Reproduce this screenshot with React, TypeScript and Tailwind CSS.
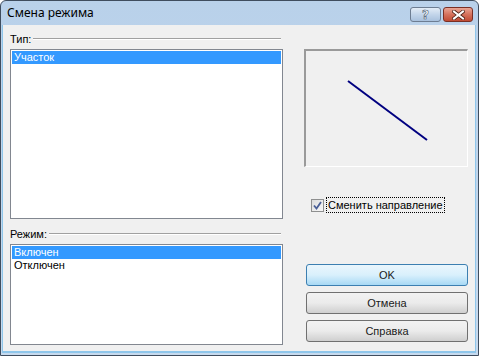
import React from "react";

const ui = { fontFamily: '"Liberation Sans", Arial, sans-serif' };

function GroupLabel({ text }: { text: string }) {
  return (
    <div className="flex h-[14px] items-center text-[11px] leading-[13px] text-black" style={ui}>
      <span className="pr-[2px]">{text}</span>
      <div className="mr-[2px] flex-1 border-t border-b border-t-[#a0a0a0] border-b-white" />
    </div>
  );
}

function ListBox({ items, height }: { items: string[]; height: string }) {
  return (
    <div className={`${height} w-full border border-[#828790] bg-white p-[1px]`}>
      {items.map((it, i) => (
        <div
          key={it}
          className={`h-[13px] pl-[2px] text-[11px] leading-[13px] ${
            i === 0 ? "bg-[#3399ff] text-white" : "text-black"
          }`}
          style={ui}
        >
          {it}
        </div>
      ))}
    </div>
  );
}

function Btn({ label, primary }: { label: string; primary?: boolean }) {
  return (
    <button
      className={`h-[22px] w-[162px] rounded-[3px] border text-[11px] font-normal text-[#1a1a1a] ${
        primary
          ? "border-[#3c7fb1] bg-gradient-to-b from-[#eaf6fd] via-[#d9f0fc] to-[#a7d9f5]"
          : "border-[#707070] bg-gradient-to-b from-[#f2f2f2] via-[#ebebeb] to-[#cfcfcf]"
      }`}
      style={ui}
    >
      {label}
    </button>
  );
}

export default function App() {
  return (
    <div className="h-[356px] w-[479px] overflow-hidden rounded-t-[6px] border border-[#3f4d5e] bg-gradient-to-b from-[#b9d1ea] to-[#c7daee]">
      {/* title bar */}
      <div className="flex h-[24px] items-start justify-between">
        <div className="pl-[6px] pt-[4px] text-[12px] leading-[16px] text-black" style={{ fontFamily: '"Noto Sans", "Open Sans", sans-serif' }}>
          Смена режима
        </div>
        <div className="mr-[5px] mt-[6px] flex gap-[2px]">
          <div className="flex h-[15px] w-[31px] items-center justify-center rounded-[3px] border border-[#6d7d92] bg-gradient-to-b from-[#e3ecf6] via-[#c3d5ea] to-[#a9c1dd]">
            <span className="text-[12px] font-bold leading-[12px] text-white" style={{ fontFamily: '"DejaVu Sans", sans-serif', WebkitTextStroke: "0.6px #4a5870" }}>
              ?
            </span>
          </div>
          <div className="flex h-[15px] w-[30px] items-center justify-center rounded-[3px] border border-[#7a2f24] bg-gradient-to-b from-[#e8a595] via-[#d5715c] to-[#c04a33]">
            <svg width="13" height="10" viewBox="0 0 13 10">
              <path d="M2 1.5 L11 8.5 M11 1.5 L2 8.5" stroke="#4d2218" strokeWidth="3.6" strokeLinecap="square" />
              <path d="M2 1.5 L11 8.5 M11 1.5 L2 8.5" stroke="#ffffff" strokeWidth="2" strokeLinecap="square" />
            </svg>
          </div>
        </div>
      </div>
      {/* client area */}
      <div className="mb-[2px] ml-[1px] mr-[2px] flex h-[328px] border-b-2 border-l border-r border-[#8fc6ea] bg-[#f0f0f0]">
        <div className="ml-[7px] flex w-[273px] flex-col pt-[7px]">
          <GroupLabel text="Тип:" />
          <div className="mt-[3px]">
            <ListBox items={["Участок"]} height="h-[170px]" />
          </div>
          <div className="mt-[8px]">
            <GroupLabel text="Режим:" />
          </div>
          <div className="mt-[3px]">
            <ListBox items={["Включен", "Отключен"]} height="h-[101px]" />
          </div>
        </div>
        <div className="ml-[21px] flex w-[164px] flex-col pt-[24px]">
          <div className="h-[118px] w-[164px] border-b border-l-2 border-r border-t-2 border-b-white border-l-[#9a9a9a] border-r-white border-t-[#9a9a9a] bg-[#f0f0f0]">
            <svg width="160" height="114" viewBox="0 0 160 114">
              <line x1="42" y1="30" x2="121" y2="89" stroke="#000080" strokeWidth="2" />
            </svg>
          </div>
          <div className="ml-[7px] mt-[30px] flex items-center">
            <div className="flex h-[13px] w-[13px] items-center justify-center border border-[#8e8f8f] bg-gradient-to-br from-[#dcdcdc] to-[#f8f8f8]">
              <svg width="9" height="9" viewBox="0 0 9 9">
                <path d="M1 4.5 L3.5 7.5 L8 1" fill="none" stroke="#4a5f97" strokeWidth="1.8" />
              </svg>
            </div>
            <div className="ml-[2px] border border-dotted border-black px-[1px] text-[11px] leading-[14px] text-black" style={ui}>
              Сменить направление
            </div>
          </div>
          <div className="ml-[2px] mt-[51px] flex flex-col gap-[6px]">
            <Btn label="OK" primary />
            <Btn label="Отмена" />
            <Btn label="Справка" />
          </div>
        </div>
      </div>
    </div>
  );
}
